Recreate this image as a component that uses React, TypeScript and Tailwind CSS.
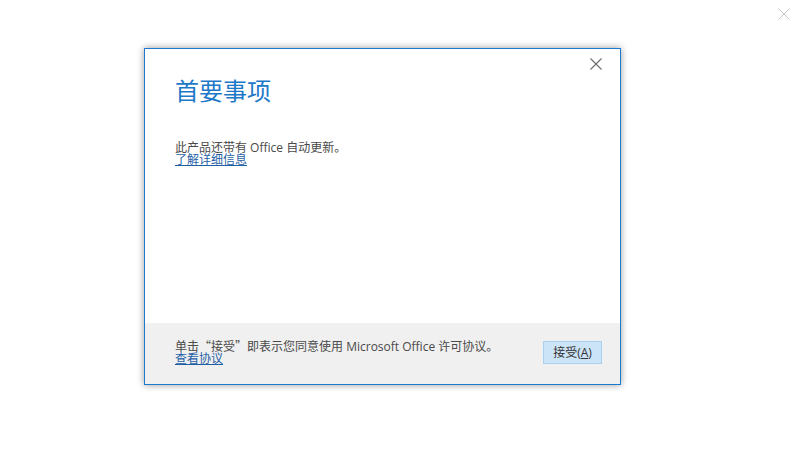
import React from "react";

const font = { fontFamily: '"Open Sans", "Noto Sans CJK SC", sans-serif' };
const cjk = { fontFamily: '"Noto Sans CJK SC", sans-serif' };

export default function App() {
  return (
    <div className="relative w-[807px] h-[451px] bg-white overflow-hidden" style={font}>
      <svg className="absolute left-[778px] top-[8px]" width="12" height="12" viewBox="0 0 12 12">
        <path d="M0.5 0.5 L11.5 11.5 M11.5 0.5 L0.5 11.5" stroke="#c8c8c8" strokeWidth="1" />
      </svg>
      <div className="pt-[48px] pl-[144px]">
        <div className="w-[477px] h-[337px] border border-[#1a7ad0] bg-white shadow-[0_0_7px_rgba(0,0,0,0.4)] flex flex-col">
          <div className="relative flex-1 pl-[30px] pt-[26px]">
            <svg className="absolute left-[445px] top-[9px]" width="12" height="12" viewBox="0 0 12 12">
              <path d="M0.5 0.5 L11.5 11.5 M11.5 0.5 L0.5 11.5" stroke="#6b6b6b" strokeWidth="1.1" />
            </svg>
            <div className="text-[24px] leading-[32px] text-[#1e78c8]">首要事项</div>
            <div className="mt-[33px] text-[12px] leading-[13px] h-[13px] text-[#4a4a4a]">
              此产品还带有 Office 自动更新<span className="inline-block h-[13px] leading-[13px]" style={cjk}>。</span>
            </div>
            <div className="text-[12px] leading-[14px] text-[#1f5fa6] underline">了解详细信息</div>
          </div>
          <div className="h-[61px] bg-[#f0f0f0] flex items-start pl-[30px] pr-[18px] pt-[16px]">
            <div className="flex-1">
              <div className="text-[12px] leading-[13px] h-[13px] text-[#4a4a4a]">
                单击<span className="inline-block h-[13px] leading-[13px]" style={cjk}>“</span>接受<span className="inline-block h-[13px] leading-[13px]" style={cjk}>”</span>即表示您同意使用 Microsoft Office 许可协议<span className="inline-block h-[13px] leading-[13px]" style={cjk}>。</span>
              </div>
              <div className="text-[12px] leading-[14px] text-[#1f5fa6] underline">查看协议</div>
            </div>
            <button className="w-[59px] h-[23px] bg-[#cce4f7] border border-[#a8d0f0] text-[12px] text-[#333] flex items-center justify-center mt-[2px]">
              接受(<span className="underline">A</span>)
            </button>
          </div>
        </div>
      </div>
    </div>
  );
}
